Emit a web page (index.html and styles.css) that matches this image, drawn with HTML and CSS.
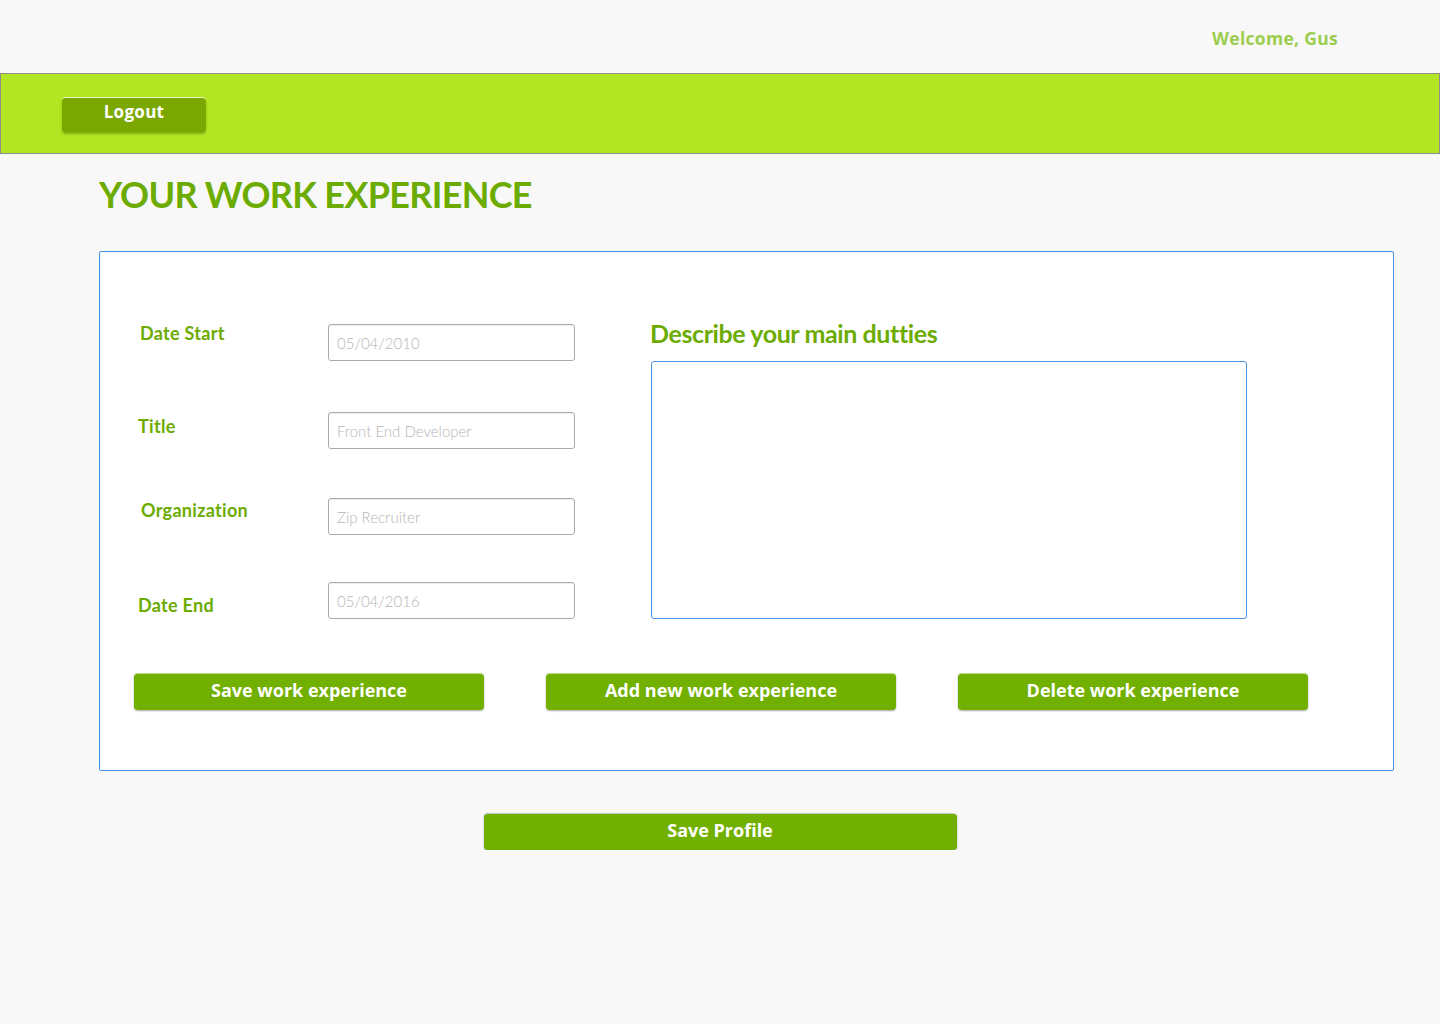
FILE: index.html
```html
<!DOCTYPE html>
<html lang="en">
<head>
<meta charset="utf-8">
<title>Your Work Experience</title>
<link rel="stylesheet" href="styles.css">
</head>
<body>
<div class="topbar">
  <span class="welcome">Welcome, Gus</span>
</div>
<header class="navbar">
  <button class="btn-logout" type="button">Logout</button>
</header>
<main class="page">
  <h1 class="page-title">YOUR WORK EXPERIENCE</h1>
  <section class="card">
    <div class="card-body">
      <div class="fields">
        <label class="field-label lbl-start" for="ds">Date Start</label>
        <input class="field-input" id="ds" type="text" placeholder="05/04/2010">
        <label class="field-label lbl-title" for="ti">Title</label>
        <input class="field-input in-title" id="ti" type="text" placeholder="Front End Developer">
        <label class="field-label lbl-org" for="org">Organization</label>
        <input class="field-input in-org" id="org" type="text" placeholder="Zip Recruiter">
        <label class="field-label lbl-end" for="de">Date End</label>
        <input class="field-input in-end" id="de" type="text" placeholder="05/04/2016">
      </div>
      <div class="duties">
        <h2 class="duties-title">Describe your main dutties</h2>
        <textarea class="duties-input"></textarea>
      </div>
    </div>
    <div class="card-actions">
      <button class="btn-green" type="button">Save work experience</button>
      <button class="btn-green" type="button">Add new work experience</button>
      <button class="btn-green" type="button">Delete work experience</button>
    </div>
  </section>
  <div class="profile-actions">
    <button class="btn-green btn-profile" type="button">Save Profile</button>
  </div>
</main>
</body>
</html>
```

FILE: styles.css
```css
* {
  box-sizing: border-box;
}

body {
  margin: 0;
  background: #f8f8f8;
  font-family: Lato, "Open Sans", sans-serif;
}

.topbar {
  height: 73px;
  display: flex;
  justify-content: flex-end;
  align-items: center;
  padding: 2px 102px 0 0;
}

.welcome {
  font-family: "Open Sans", sans-serif;
  font-weight: 700;
  font-size: 17.5px;
  color: #9dcd4f;
  letter-spacing: 0.3px;
}

.navbar {
  height: 81px;
  background: #b2e622;
  border: 1px solid #8e8e8e;
  padding: 23px 0 0 61px;
}

.btn-logout {
  width: 144px;
  height: 35px;
  background: #7aa800;
  border: none;
  border-top: 1px solid #e9f7c4;
  border-radius: 4px;
  box-shadow: 0 2px 2px rgba(70, 100, 0, 0.45);
  color: #fff;
  font-family: "Open Sans", sans-serif;
  font-weight: 700;
  font-size: 17px;
  padding: 0 0 8px;
  letter-spacing: 0.3px;
}

.page {
  padding: 0 46px 0 99px;
}

.page-title {
  margin: 20px 0 0;
  font-family: Lato, sans-serif;
  font-weight: 700;
  font-size: 36px;
  line-height: 40px;
  letter-spacing: -0.7px;
  color: #6cab00;
}

.card {
  margin-top: 37px;
  background: #fff;
  border: 1px solid #4a90e2;
  border-radius: 2px;
  height: 520px;
  padding-top: 66px;
}

.card-body {
  display: flex;
}

.fields {
  display: grid;
  grid-template-columns: 188px 247px;
  grid-template-rows: repeat(4, 37px);
  row-gap: 50px;
  padding: 6px 0 0 40px;
}

.field-label {
  font-family: Lato, sans-serif;
  font-weight: 700;
  font-size: 18px;
  line-height: 22px;
  letter-spacing: 0.3px;
  color: #6cab00;
}

.lbl-start { margin-top: -2px; }
.lbl-title { margin: 4px 0 0 -2px; }
.lbl-org { margin: 1px 0 0 1px; }
.lbl-end { margin: 9px 0 0 -2px; }

.in-title { margin-top: 1px; }
.in-end { margin-top: -3px; }

.field-input {
  height: 37px;
  border: 1px solid #ababab;
  border-radius: 3px;
  box-shadow: inset 0 1px 1px rgba(0, 0, 0, 0.08);
  padding: 0 8px;
  font-family: Lato, sans-serif;
  font-weight: 300;
  font-size: 15px;
  color: #666;
  background: #fff;
}

.field-input::placeholder {
  color: #b5b5b5;
}

.duties {
  margin-left: 75px;
  display: flex;
  flex-direction: column;
}

.duties-title {
  margin: 0 0 13px;
  font-family: Lato, sans-serif;
  font-weight: 700;
  font-size: 25px;
  line-height: 30px;
  letter-spacing: -0.4px;
  color: #6cab00;
}

.duties-input {
  margin-left: 1px;
  width: 596px;
  height: 258px;
  border: 1px solid #4a90e2;
  border-radius: 3px;
  resize: none;
  background: #fff;
}

.card-actions {
  display: flex;
  gap: 62px;
  padding: 51px 0 0 34px;
}

.btn-green {
  width: 350px;
  height: 37px;
  background: #72b000;
  border: none;
  border-top: 1px solid #b9e07a;
  border-radius: 4px;
  box-shadow: 0 1px 2px rgba(0, 0, 0, 0.35);
  color: #fff;
  font-family: "Open Sans", sans-serif;
  font-weight: 700;
  font-size: 18px;
  letter-spacing: 0;
  padding: 0 0 5px;
}

.profile-actions {
  display: flex;
  justify-content: center;
  padding: 42px 0 0 0;
  margin-left: -53px;
}

.btn-profile {
  width: 473px;
  border-top-color: #c8c8c8;
}
```
